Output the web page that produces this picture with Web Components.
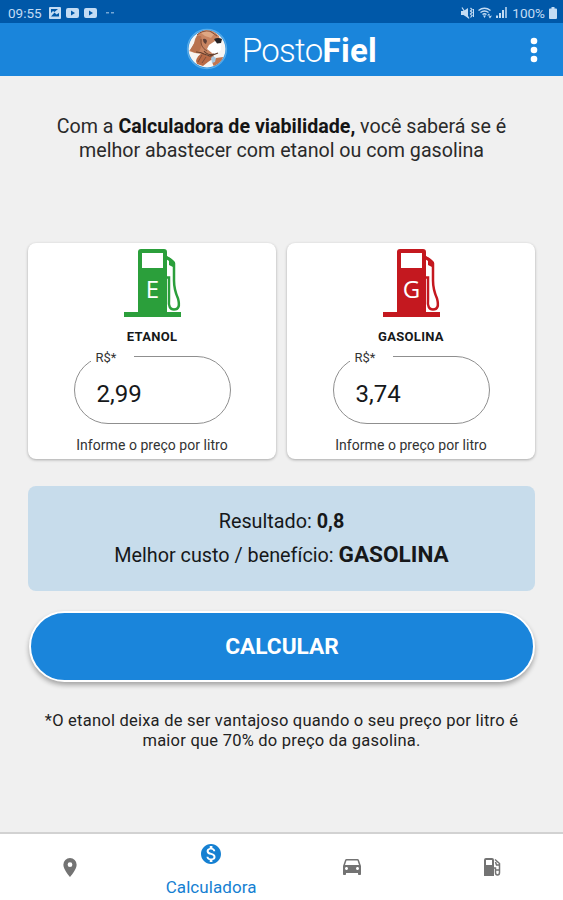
<!DOCTYPE html>
<html lang="pt-BR">
<head>
<meta charset="utf-8">
<title>PostoFiel</title>
<style>
  body {
    margin: 0;
    height: 900px;
    background: #f0f0f0;
    color: #16181a;
    font-family: Roboto, "Liberation Sans", sans-serif;
    overflow: hidden;
  }
</style>
</head>
<body>
<posto-app></posto-app>

<script>
const statusTemplate = document.createElement("template");
statusTemplate.innerHTML = `
  <style>
    :host {
      display: flex;
      justify-content: space-between;
      align-items: center;
      box-sizing: border-box;
      height: 23px;
      padding: 2px 6px 0 8px;
      background: #0058a8;
      color: #c3dcf4;
      font-size: 13.5px;
      line-height: 20px;
    }
    div { display: flex; align-items: center; }
    svg { display: block; fill: currentColor; }
    .left svg { margin-left: 7px; }
    .left svg + svg { margin-left: 5px; }
    .right span { margin: 0 4px 0 5px; }
  </style>
  <div class="left">
    <span>09:55</span>
    <svg width="12" height="12" viewBox="0 0 12 12"><path fill-rule="evenodd" d="M1 0h10q1 0 1 1v10q0 1-1 1H1q-1 0-1-1V1q0-1 1-1zM2 9.500h8V6L7.500 7.500 5.500 5.500zM2 2v4l2-2 1.500 1L9 2z"/></svg>
    <svg width="13" height="10" viewBox="0 0 13 10"><path fill-rule="evenodd" d="M2 0h9q2 0 2 2v6q0 2-2 2H2q-2 0-2-2V2q0-2 2-2zM5 2.500v5L9 5z"/></svg>
    <svg width="13" height="10" viewBox="0 0 13 10"><path fill-rule="evenodd" d="M2 0h9q2 0 2 2v6q0 2-2 2H2q-2 0-2-2V2q0-2 2-2zM5 2.500v5L9 5z"/></svg>
    <svg style="margin-left:9px" width="8" height="2" viewBox="0 0 8 2"><path opacity=".6" d="M0 0h3v1.500H0zM5 0h3v1.500H5z"/></svg>
  </div>
  <div class="right">
    <svg width="13" height="12" viewBox="0 0 13 12"><path d="M0 4h2.500L7 1v10L2.500 8H0z"/><path d="M1 .5 8 11.500M9.500 1l1.500 1.500L9.500 4 11 5.500 9.500 7 11 8.500 9.500 10.500M12.500 2v8" fill="none" stroke="currentColor" stroke-width="1.200"/></svg>
    <svg style="margin-left:4px" width="15" height="12" viewBox="0 0 15 12"><path d="M.5 3.500Q6.500-1 12.500 3.500M2.500 5.500q4-3 8 0M4.500 7.500q2-1.500 4 0" fill="none" stroke="currentColor" stroke-width="1.400"/><path d="m6.500 11-1.500-2.500h3zM9 8.500l2-2 1.200 2zM14 8.500l-2 3-1.500-2z"/></svg>
    <svg style="margin-left:3px" width="11" height="11" viewBox="0 0 11 11"><path d="M0 8.500h2V11H0zM3 6h2v5H3zM6 3h2v8H6z"/><path opacity=".75" d="M9 0h2v11H9z"/></svg>
    <span>100%</span>
    <svg width="8" height="12" viewBox="0 0 8 12"><path d="M2.500 0h3v1.500H7q1 0 1 1V11q0 1-1 1H1q-1 0-1-1V2.500q0-1 1-1h1.500z"/></svg>
  </div>
`;

const headerTemplate = document.createElement("template");
headerTemplate.innerHTML = `
  <style>
    :host {
      display: grid;
      grid-template-columns: 1fr auto 1fr;
      align-items: center;
      height: 53px;
      background: #1a85db;
      color: #fff;
    }
    .brand {
      grid-column: 2;
      display: flex;
      align-items: center;
      gap: 14px;
    }
    .logo { display: block; margin-top: -2px; }
    h1 {
      margin: 2px 0 0;
      font-size: 33px;
      line-height: 40px;
      font-weight: 300;
      letter-spacing: -.7px;
    }
    h1 b { font-weight: 700; letter-spacing: .3px; }
    .more {
      display: block;
      justify-self: end;
      margin-right: 25px;
      fill: #fff;
    }
  </style>
  <div class="brand">
    <svg class="logo" width="42" height="42" viewBox="0 0 42 42">
      <defs><clipPath id="disc"><circle cx="21" cy="21" r="18.500"/></clipPath></defs>
      <circle cx="21" cy="21" r="19.500" fill="none" stroke="#55abe9" stroke-width="1.300"/>
      <circle cx="21" cy="21" r="18.500" fill="#f6f5f3"/>
      <path d="M9 11Q12 3 20 2q8 0 13 6l1 6-2 10-10 3-13-2-6-2q5-4 6-12z" fill="#c98562"/>
      <g clip-path="url(#disc)">
        <path d="M11 8q-2 7-7 14 6 5 10 0 3-7 1-14z" fill="#b8724f"/>
        <path d="m15 5 6-2 7 3-3 4-6-2z" fill="#dfa783"/>
        <path d="M10 33q1-5 6-8l6 3 5-2 1 4-6 4-5 4-6-2z" fill="#b96a46"/>
        <path d="m26 34 4-4 7-1-1 6-8 4z" fill="#c07550"/>
        <path d="M23 17l6-4 6 2v7q-4 5-9 3l-5-4z" fill="#fff"/>
        <path d="M10 24q5 0 8 2l6 2 8-3M18 23q4 5 10 3" fill="none" stroke="#66402e" stroke-width="1.200"/>
        <path d="M28 11q4-2 8 0l-1 4-4 .5z" fill="#252326"/>
        <path d="M17 11q3-1 4 2l-1 3q-3-1-3-5z" fill="#5f4038"/>
        <path d="M15 11q-1 8 6 12M11 7q5-5 13-4l7 5M12 34l4-7M16 35l4-6" fill="none" stroke="#81503b"/>
        <path d="m25 30 2-2 3 2-1 4-3 1z" fill="#a9c7dd"/>
      </g>
    </svg>
    <h1>Posto<b>Fiel</b></h1>
  </div>
  <svg class="more" width="8" height="26" viewBox="0 0 8 26"><circle cx="4" cy="4" r="3.300"/><circle cx="4" cy="13" r="3.300"/><circle cx="4" cy="22" r="3.300"/></svg>
`;

const cardTemplate = document.createElement("template");
cardTemplate.innerHTML = `
  <style>
    :host {
      display: flex;
      flex-direction: column;
      align-items: center;
      box-sizing: border-box;
      height: 216px;
      padding-top: 6px;
      border-radius: 8px;
      background: #fff;
      box-shadow: 0 1px 3px rgba(0, 0, 0, .3);
    }
    svg { display: block; color: var(--fuel); }
    svg text {
      font: 24px "Open Sans", sans-serif;
      fill: #fff;
      text-anchor: middle;
    }
    h2 {
      margin: 11px 0 0;
      font-size: 13px;
      line-height: 18px;
      font-weight: 700;
      letter-spacing: .3px;
    }
    fieldset {
      box-sizing: border-box;
      width: 157px;
      height: 75px;
      margin: 3px 0 0;
      padding: 0 0 0 22px;
      border: 1px solid #8f8f8f;
      border-radius: 34px;
    }
    legend {
      box-sizing: border-box;
      width: 43px;
      height: 14px;
      margin-left: -6px;
      padding: 4px 0 0 5px;
      font-size: 13px;
      line-height: 10px;
      color: #333;
    }
    .value {
      padding-top: 17px;
      font-size: 24px;
      line-height: 28px;
    }
    small {
      margin-top: 12px;
      font-size: 14px;
      line-height: 18px;
      letter-spacing: .04px;
      color: #333;
    }
  </style>
  <svg width="57" height="68" viewBox="0 0 57 68">
    <path fill="currentColor" fill-rule="evenodd" d="M17 0h23q3 0 3 3v60h14v5H0v-5h14V3q0-3 3-3zM18 4v15h21V4z"/>
    <path fill="none" stroke="currentColor" stroke-width="2.500" d="M42 8.500q5 1 8 6v17q0 9 4 18 3 11-4 11-6 0-5-10V28.500h-3"/>
    <path fill="currentColor" d="m43 7 8 6v6l-6-3v-4l-3-2z"/>
    <text x="28.500" y="48.500"></text>
  </svg>
  <h2></h2>
  <fieldset>
    <legend>R$*</legend>
    <div class="value"></div>
  </fieldset>
  <small><slot></slot></small>
`;

const resultTemplate = document.createElement("template");
resultTemplate.innerHTML = `
  <style>
    :host {
      display: flex;
      flex-direction: column;
      align-items: center;
      box-sizing: border-box;
      height: 105px;
      padding-top: 19px;
      border-radius: 8px;
      background: #c7dceb;
      font-size: 19.800px;
      line-height: 34px;
    }
    ::slotted(div) { white-space: nowrap; }
  </style>
  <slot></slot>
`;

const buttonTemplate = document.createElement("template");
buttonTemplate.innerHTML = `
  <style>
    :host { display: block; }
    button {
      display: block;
      box-sizing: border-box;
      width: 100%;
      height: 71px;
      padding: 0;
      border: 2px solid #fff;
      border-radius: 36px;
      background: #1a85db;
      box-shadow: 0 3px 5px rgba(0, 0, 0, .32);
      color: #fff;
      font: 700 22.700px Roboto, sans-serif;
    }
  </style>
  <button><slot></slot></button>
`;

const navTemplate = document.createElement("template");
navTemplate.innerHTML = `
  <style>
    :host {
      display: grid;
      grid-template-columns: repeat(4, 1fr);
      box-sizing: border-box;
      height: 68px;
      border-top: 2px solid #d2d2d2;
      background: #fff;
      color: #737373;
    }
    div {
      display: flex;
      flex-direction: column;
      align-items: center;
      justify-content: center;
    }
    .active {
      justify-content: flex-start;
      padding-top: 10px;
      color: #1580d2;
    }
    span {
      margin-top: 12px;
      font-size: 17px;
      line-height: 22px;
      letter-spacing: .08px;
    }
    svg { display: block; fill: currentColor; }
  </style>
  <div><svg width="14" height="19" viewBox="0 0 14 20"><path fill-rule="evenodd" d="M7 0a7 7 0 0 1 7 7c0 5-7 13-7 13S0 12 0 7a7 7 0 0 1 7-7zm0 4.500a2.500 2.500 0 1 0 0 5 2.500 2.500 0 0 0 0-5z"/></svg></div>
  <div class="active">
    <svg width="20" height="20" viewBox="2 2 20 20"><path d="M12 2C6.480 2 2 6.480 2 12s4.480 10 10 10 10-4.480 10-10S17.520 2 12 2zm1.410 16.090V20h-2.670v-1.930c-1.710-.36-3.160-1.460-3.270-3.400h1.960c.1 1.050.82 1.870 2.650 1.870 1.960 0 2.400-.98 2.400-1.590 0-.83-.44-1.610-2.670-2.140-2.480-.6-4.180-1.620-4.180-3.670 0-1.720 1.390-2.840 3.110-3.210V4h2.670v1.950c1.860.45 2.790 1.860 2.850 3.390H14.300c-.05-1.110-.64-1.870-2.220-1.870-1.500 0-2.400.68-2.400 1.640 0 .84.65 1.390 2.670 1.910s4.180 1.390 4.180 3.910c-.01 1.830-1.380 2.830-3.120 3.160z"/></svg>
    <span>Calculadora</span>
  </div>
  <div><svg width="18" height="16" viewBox="3 5 18 16" preserveAspectRatio="none"><path d="M18.920 6.010C18.720 5.420 18.160 5 17.500 5h-11c-.66 0-1.210.42-1.420 1.010L3 12v8c0 .55.450 1 1 1h1c.55 0 1-.45 1-1v-1h12v1c0 .55.450 1 1 1h1c.55 0 1-.45 1-1v-8l-2.080-5.990zM6.500 16c-.83 0-1.500-.67-1.500-1.500S5.670 13 6.500 13s1.500.67 1.500 1.500S7.330 16 6.500 16zm11 0c-.83 0-1.500-.67-1.500-1.500s.67-1.500 1.500-1.500 1.500.67 1.500 1.500-.67 1.500-1.500 1.500zM5 11l1.500-4.500h11L19 11H5z"/></svg></div>
  <div><svg width="17" height="18" viewBox="0 0 17 18"><path fill-rule="evenodd" d="M2 0h6q2 0 2 2v16H0V2q0-2 2-2zM2 2v5h6V2z"/><path fill="none" stroke="currentColor" stroke-width="1.500" d="m11 1.500 4.500 4v9q0 2.500-2 2.500t-2-2.500V10H10M11.500 4l1 3h3M12 12h4"/></svg></div>
`;

const appTemplate = document.createElement("template");
appTemplate.innerHTML = `
  <style>
    :host {
      display: flex;
      flex-direction: column;
      height: 900px;
    }
    main {
      flex: 1;
      padding: 0 28px;
    }
    p {
      margin: 0;
      text-align: center;
      white-space: nowrap;
    }
    .intro {
      height: 128px;
      padding-top: 39px;
      font-size: 19.650px;
      line-height: 23.500px;
      color: #2a2a2a;
    }
    .intro b { color: #151515; }
    .cards {
      display: grid;
      grid-template-columns: 1fr 1fr;
      gap: 11px;
      margin-bottom: 27px;
    }
    calc-button { margin: 20px 0 29px 1px; }
    .big { font-size: 22.600px; line-height: 1; }
    .note {
      /* the two lines run wider than the cards' inner text */
      font-size: 16.500px;
      line-height: 20px;
      letter-spacing: .23px;
      color: #222;
    }
  </style>
  <status-bar></status-bar>
  <app-header></app-header>
  <main>
    <p class="intro">Com a <b>Calculadora de viabilidade,</b> você saberá se é<br>melhor abastecer com etanol ou com gasolina</p>
    <div class="cards">
      <fuel-card letter="E" name="ETANOL" value="2,99" color="#2b9f3b">Informe o preço por litro</fuel-card>
      <fuel-card letter="G" name="GASOLINA" value="3,74" color="#c4181f">Informe o preço por litro</fuel-card>
    </div>
    <result-panel>
      <div>Resultado: <b>0,8</b></div>
      <div>Melhor custo / benefício: <b class="big">GASOLINA</b></div>
    </result-panel>
    <calc-button>CALCULAR</calc-button>
    <p class="note">*O etanol deixa de ser vantajoso quando o seu preço por litro é<br>maior que 70% do preço da gasolina.</p>
  </main>
  <bottom-nav></bottom-nav>
`;

class TemplateElement extends HTMLElement {
  constructor(template) {
    super();
    const shadowRoot = this.attachShadow({ mode: "open" });
    shadowRoot.appendChild(template.content.cloneNode(true));
  }
}

class StatusBar extends TemplateElement {
  constructor() { super(statusTemplate); }
}

class AppHeader extends TemplateElement {
  constructor() { super(headerTemplate); }
}

class FuelCard extends TemplateElement {
  constructor() { super(cardTemplate); }

  connectedCallback() {
    const root = this.shadowRoot;
    this.style.setProperty("--fuel", this.getAttribute("color"));
    root.querySelector("text").textContent = this.getAttribute("letter");
    root.querySelector("h2").textContent = this.getAttribute("name");
    root.querySelector(".value").textContent = this.getAttribute("value");
  }
}

class ResultPanel extends TemplateElement {
  constructor() { super(resultTemplate); }
}

class CalcButton extends TemplateElement {
  constructor() { super(buttonTemplate); }
}

class BottomNav extends TemplateElement {
  constructor() { super(navTemplate); }
}

class PostoApp extends TemplateElement {
  constructor() { super(appTemplate); }
}

window.customElements.define("status-bar", StatusBar);
window.customElements.define("app-header", AppHeader);
window.customElements.define("fuel-card", FuelCard);
window.customElements.define("result-panel", ResultPanel);
window.customElements.define("calc-button", CalcButton);
window.customElements.define("bottom-nav", BottomNav);
window.customElements.define("posto-app", PostoApp);
</script>
</body>
</html>
